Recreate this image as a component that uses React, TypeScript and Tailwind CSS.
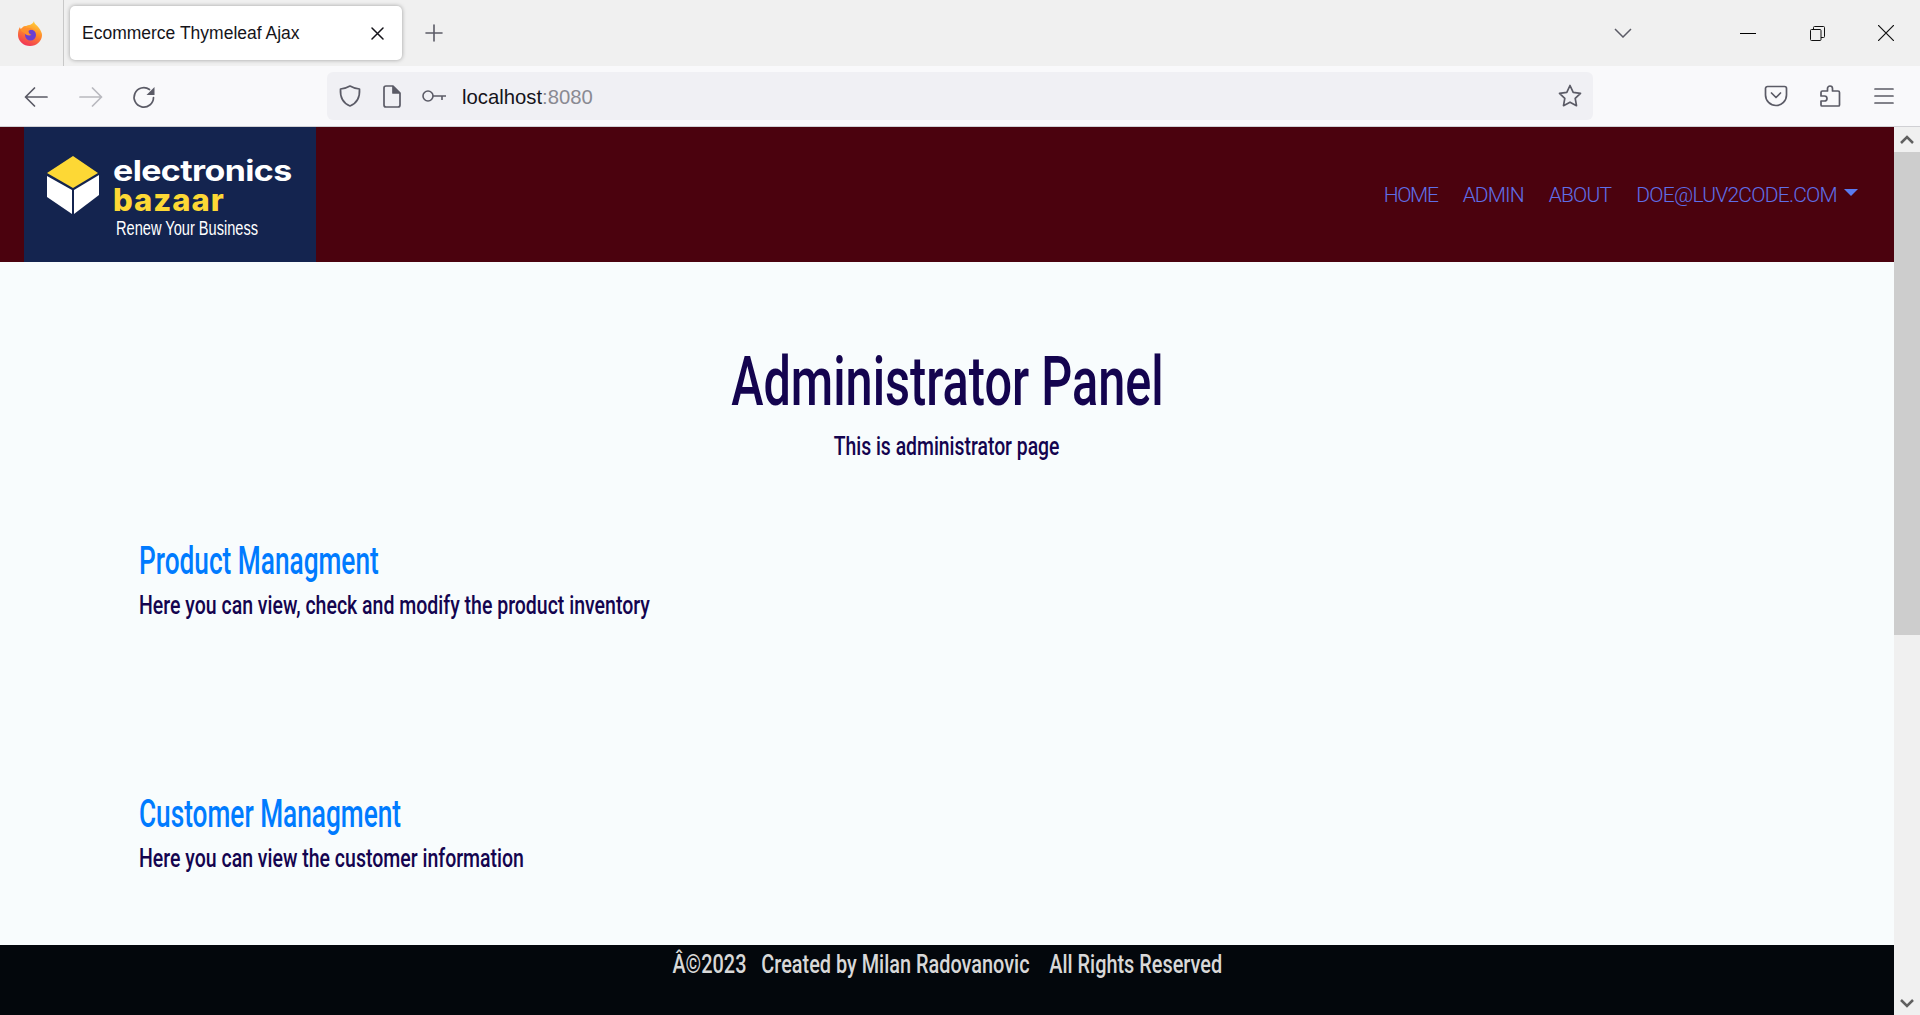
import React from "react";

const FONT = "font-['Roboto',sans-serif] font-medium";
const COND = "inline-block whitespace-nowrap";

function Firefox() {
  return (
    <svg width="24" height="25" viewBox="0 0 24 25">
      <defs>
        <linearGradient id="ff" x1="0.7" y1="0" x2="0.3" y2="1">
          <stop offset="0" stopColor="#ffd43b" />
          <stop offset="0.45" stopColor="#ff8a2a" />
          <stop offset="1" stopColor="#f0305a" />
        </linearGradient>
      </defs>
      <path d="M16 0c0 3 3 4 5 7 2 3 3 5 3 7a12 11 0 0 1-24 0c0-3 .5-6 2-8 0 1 .5 2 1.500 2.500C4 6 6 4.500 8 5c2-1 7-1 8-5z" fill="url(#ff)" />
      <circle cx="12.500" cy="14" r="5.500" fill="#6b3fd4" />
      <path d="M2.500 8c3-2 5-2 6-.5 2-1 5-.5 7 1.500-2-.5-4 0-5 1 0 2 1 3 3 4-3 1-6 0-7-2-2-1-4-2-4-4z" fill="#ff8f2e" />
    </svg>
  );
}

function NavIcon({ children, size = 24 }: { children: React.ReactNode; size?: number }) {
  return (
    <svg width={size} height={size} viewBox="0 0 24 24" fill="none" stroke="#5b5b66" strokeWidth="1.700" strokeLinecap="round" strokeLinejoin="round" className="shrink-0">
      {children}
    </svg>
  );
}

function Logo() {
  return (
    <div className="w-[292px] h-[135px] shrink-0 bg-[#14244f] flex items-start pl-[23px] gap-[14px]">
      <svg width="52" height="58" viewBox="0 0 52 58" className="mt-[29px] shrink-0">
        <polygon points="26,0 51,17 26,32 0,17" fill="#fdd835" />
        <polygon points="0,20 25,34 25,58 0,41" fill="#ffffff" />
        <polygon points="27,34 52,19 52,39 27,58" fill="#ffffff" />
      </svg>
      <div className="flex flex-col pt-[29px]">
        <div className="font-['Inter',sans-serif] font-bold text-white text-[29px] leading-[30px] tracking-[-0.5px] scale-x-[1.17] origin-left whitespace-nowrap">electronics</div>
        <div className="font-['Inter',sans-serif] font-extrabold text-[#fdd835] text-[31px] leading-[28px] tracking-[1px] whitespace-nowrap">bazaar</div>
        <div className="font-['Liberation_Sans',sans-serif] text-white text-[20px] leading-[22px] mt-[3px] ml-[3px] scale-x-[0.73] origin-left whitespace-nowrap">Renew Your Business</div>
      </div>
    </div>
  );
}

function BrowserChrome() {
  return (
    <div className="h-[127px] shrink-0 flex flex-col">
      <div className="h-[66px] bg-[#f0f0f0] flex items-center">
        <div className="w-[64px] h-[66px] shrink-0 flex items-center pl-[18px] border-r border-[#c8c8c8]">
          <Firefox />
        </div>
        <div className="ml-[6px] w-[332px] h-[54px] shrink-0 bg-white rounded-[5px] shadow-[0_0_4px_rgba(0,0,0,0.35)] flex items-center pl-[12px] pr-[18px] justify-between font-['Liberation_Sans',sans-serif] text-[17.5px] text-[#15141a]">
          <span>Ecommerce Thymeleaf Ajax</span>
          <svg width="13" height="13" viewBox="0 0 13 13" stroke="#15141a" strokeWidth="1.500" strokeLinecap="round"><path d="M1 1l11 11M12 1L1 12" /></svg>
        </div>
        <div className="ml-[23px]">
          <svg width="18" height="18" viewBox="0 0 18 18" stroke="#5b5b66" strokeWidth="1.600" strokeLinecap="round"><path d="M9 1v16M1 9h16" /></svg>
        </div>
        <div className="ml-auto pr-[26px] flex items-center">
          <svg width="18" height="10" viewBox="0 0 18 10" fill="none" stroke="#5b5b66" strokeWidth="1.500" className="mr-[108px]"><path d="M1 1l8 8 8-8" /></svg>
          <div className="w-[16px] h-px bg-black mr-[54px]" />
          <svg width="15" height="15" viewBox="0 0 15 15" fill="none" stroke="#111" strokeWidth="1" className="mr-[53px]"><rect x="0.500" y="3.500" width="10.500" height="11" rx="1" /><path d="M3.500 3.500v-2a1 1 0 0 1 1-1h9a1 1 0 0 1 1 1v9a1 1 0 0 1-1 1H11" /></svg>
          <svg width="16" height="16" viewBox="0 0 16 16" stroke="#111" strokeWidth="1.200"><path d="M0 0l16 16M16 0L0 16" /></svg>
        </div>
      </div>
      <div className="h-[60px] bg-[#f9f9fb] flex items-center pl-[24px]">
        <div className="flex items-center pt-[2px]">
          <NavIcon><path d="M23 12H1.500M10.500 3l-9 9 9 9" /></NavIcon>
          <div className="ml-[31px] opacity-40">
            <NavIcon><path d="M1 12h21.500M13.500 3l9 9-9 9" /></NavIcon>
          </div>
          <div className="ml-[29px]">
            <NavIcon>
              <path d="M21.500 12.500A9.700 9.700 0 1 1 17.500 4.500" />
              <path d="M22.500 2v8h-8z" fill="#5b5b66" stroke="none" />
            </NavIcon>
          </div>
        </div>
        <div className="ml-[171px] w-[1266px] h-[48px] shrink-0 bg-[#f0f0f4] rounded-[6px] flex items-center pl-[11px] pr-[11px]">
          <NavIcon><path d="M12 2c3.500 2 6 2.800 9.500 3 .5 8-2 14-9.500 17C4.500 19 2 13 2.500 5 6 4.800 8.500 4 12 2z" /></NavIcon>
          <div className="ml-[21px]">
            <svg width="18" height="24" viewBox="0 0 18 24" fill="none" stroke="#5b5b66" strokeWidth="1.700" strokeLinejoin="round"><path d="M1 4a2 2 0 0 1 2-2h7l7 7v12a2 2 0 0 1-2 2H3a2 2 0 0 1-2-2z" /><path d="M10 2v7h7" fill="#5b5b66" /></svg>
          </div>
          <div className="ml-[21px]">
            <svg width="24" height="14" viewBox="0 0 24 14" fill="none" stroke="#5b5b66" strokeWidth="1.600"><circle cx="6" cy="7" r="5" /><path d="M11 7H24M20 7v4" /></svg>
          </div>
          <div className="ml-[16px] pt-[2px] font-['Liberation_Sans',sans-serif] text-[20.300px] text-[#15141a]">
            localhost<span className="text-[#8a8a92]">:8080</span>
          </div>
          <div className="ml-auto">
            <NavIcon><path d="M12 1.500l3.200 6.800 7.300 1-5.300 5.100 1.300 7.300-6.500-3.500-6.500 3.500 1.300-7.300L1.500 9.300l7.300-1z" /></NavIcon>
          </div>
        </div>
        <div className="ml-auto flex items-center pr-[24px] gap-[30px]">
          <NavIcon>
            <path d="M3.500 2.500h17a2 2 0 0 1 2 2V11a10.500 10.500 0 0 1-21 0V4.500a2 2 0 0 1 2-2z" />
            <path d="M7.500 9l4.500 4.500L16.500 9" />
          </NavIcon>
          <NavIcon>
            <path d="M9.500 7V4.500a2.500 2.500 0 0 1 5 0V7H20a1.500 1.500 0 0 1 1.500 1.500V21a1 1 0 0 1-1 1H4a1 1 0 0 1-1-1v-4h3.500a2.500 2.500 0 0 0 0-5H3V8.500A1.500 1.500 0 0 1 4.500 7z" />
          </NavIcon>
          <NavIcon><path d="M3 5h18M3 12h18M3 19h18" /></NavIcon>
        </div>
      </div>
      <div className="h-px bg-[#d0d0d4]" />
    </div>
  );
}

function Section({ title, text, className }: { title: string; text: string; className?: string }) {
  return (
    <div className={className}>
      <h3 className={`${FONT} text-[#007bff] text-[38px] leading-[44px]`}>
        <span className={`${COND} scale-x-[0.69] origin-left`}>{title}</span>
      </h3>
      <p className={`${FONT} text-[#14044f] text-[26px] leading-[36px] mt-[4px]`}>
        <span className={`${COND} scale-x-[0.75] origin-left`}>{text}</span>
      </p>
    </div>
  );
}

export default function App() {
  return (
    <div className="w-[1920px] h-[1015px] flex flex-col overflow-hidden">
      <BrowserChrome />
      <div className="flex-1 flex min-h-0">
        <div className="flex-1 flex flex-col bg-[#f8fcfd] min-w-0">
          <header className="h-[135px] shrink-0 bg-[#4b020e] flex items-start pl-[24px]">
            <Logo />
            <nav className="ml-auto pr-[36px] pt-[55px] flex items-center gap-[25px] font-['Roboto',sans-serif] font-light text-[21px] leading-[26px] text-[#5f6fe8]">
              <a className="tracking-[-1.300px]">HOME</a>
              <a className="tracking-[-0.900px]">ADMIN</a>
              <a className="tracking-[-0.800px]">ABOUT</a>
              <a className="flex items-center gap-[7px] tracking-[-0.750px]">
                DOE@LUV2CODE.COM
                <span className="w-0 h-0 border-x-[7px] border-x-transparent border-t-[7px] border-t-[#5a7bf0] -mt-[6px]" />
              </a>
            </nav>
          </header>
          <main className="flex-1 min-h-0 flex flex-col">
            <div className="text-center pt-[82px]">
              <h1 className={`${FONT} text-[#14044f] text-[68px] leading-[76px]`}>
                <span className={`${COND} scale-x-[0.715]`}>Administrator Panel</span>
              </h1>
              <p className={`${FONT} text-[#14044f] text-[26px] leading-[36px] mt-[8px]`}>
                <span className={`${COND} scale-x-[0.745]`}>This is administrator page</span>
              </p>
            </div>
            <Section className="pl-[139px] mt-[75px]" title="Product Managment" text="Here you can view, check and modify the product inventory" />
            <Section className="pl-[139px] mt-[169px]" title="Customer Managment" text="Here you can view the customer information" />
          </main>
          <footer className={`h-[70px] shrink-0 bg-[#03070c] text-center ${FONT} text-[#d8d8d8] text-[26px] leading-[38px]`}>
            <span className={`${COND} whitespace-pre scale-x-[0.765]`}>{"Â©2023   Created by Milan Radovanovic    All Rights Reserved"}</span>
          </footer>
        </div>
        <div className="w-[26px] shrink-0 bg-[#f0f0f0] flex flex-col">
          <div className="h-[25px] flex items-center justify-center">
            <svg width="14" height="10" viewBox="0 0 14 10" fill="none" stroke="#606060" strokeWidth="2.500"><path d="M1 8l6-6 6 6" /></svg>
          </div>
          <div className="h-[483px] bg-[#cdcdcd]" />
          <div className="mt-auto h-[25px] flex items-center justify-center">
            <svg width="14" height="10" viewBox="0 0 14 10" fill="none" stroke="#606060" strokeWidth="2.500"><path d="M1 2l6 6 6-6" /></svg>
          </div>
        </div>
      </div>
    </div>
  );
}
